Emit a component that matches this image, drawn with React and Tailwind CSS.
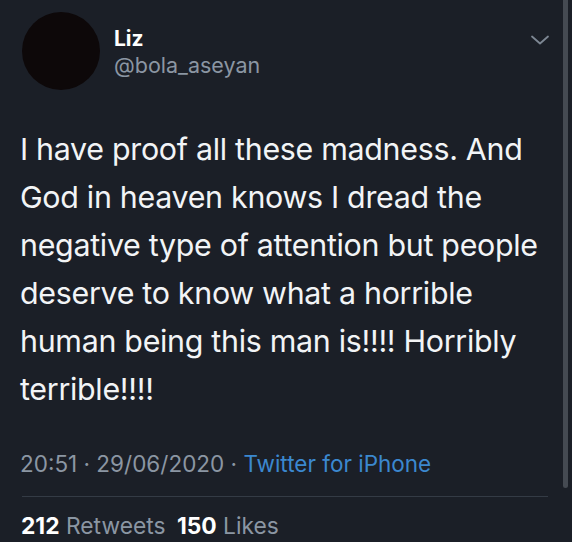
import React from 'react';

const lines = [
    'I have proof all these madness. And',
    'God in heaven knows I dread the',
    'negative type of attention but people',
    'deserve to know what a horrible',
    'human being this man is!!!! Horribly',
    'terrible!!!!',
];

const App = () => {
    return (
        <div className="relative w-[572px] h-[542px] overflow-hidden bg-[#1b1f27] text-white" style={{ fontFamily: 'Inter, "Liberation Sans", sans-serif' }}>
            {/* header */}
            <div className="flex items-start pl-[22px] pt-[12px] pr-[22px]">
                <div className="w-[78px] h-[78px] rounded-full bg-[#0d0809] shrink-0" />
                <div className="ml-[14px] mt-[14px] flex-1">
                    <div className="text-[21px] font-bold leading-[25px]">Liz</div>
                    <div className="text-[21.5px] leading-[27px] text-[#8b96a3] mt-[1px]">@bola_aseyan</div>
                </div>
                <svg className="w-[20px] h-[12px] mt-[22px] text-[#7d8793]" viewBox="0 0 20 12" fill="none" stroke="currentColor" strokeWidth="1.8" strokeLinecap="round" strokeLinejoin="round">
                    <path d="M2 2.5l8 7 8-7" />
                </svg>
            </div>

            {/* tweet text */}
            <div className="pl-[20px] mt-[35px] text-[30.4px] leading-[48px] text-[#f2f4f6] tracking-[-0.3px]">
                {lines.map((line) => (
                    <div key={line} className="whitespace-nowrap">{line}</div>
                ))}
            </div>

            {/* meta */}
            <div className="pl-[20px] mt-[37px] text-[22.5px] leading-[28px] text-[#8b96a3]">
                20:51 · 29/06/2020 · <span className="text-[#3b88cf]">Twitter for iPhone</span>
            </div>

            <div className="ml-[22px] mr-[24px] mt-[18px] border-t border-[#343b45]" />

            <div className="pl-[21px] mt-[14px] text-[22.8px] leading-[30px] text-[#8b96a3]">
                <span className="font-bold text-white">212</span> Retweets <span className="ml-[5px] font-bold text-white">150</span> Likes
            </div>

            {/* scrollbar */}
            <div className="absolute right-[4px] top-0 w-[5px] h-[488px] rounded-b-full bg-[#454a52]" />
        </div>
    );
};

export default App;
